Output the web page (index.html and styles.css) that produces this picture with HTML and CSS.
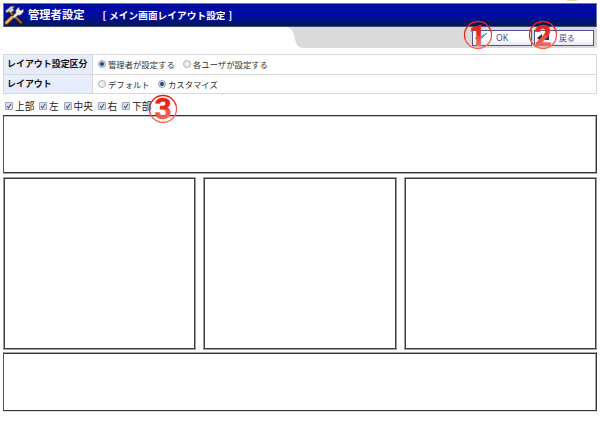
FILE: index.html
```html
<!DOCTYPE html>
<html lang="ja">
<head>
<meta charset="utf-8">
<title>管理者設定</title>
<link rel="stylesheet" href="styles.css">
</head>
<body>
<div class="page">
  <i class="tab-stub"></i>
  <header class="header">
    <svg class="tools" viewBox="0 0 20 20">
      <path d="M6 7 17 18" stroke="#26150c" stroke-width="4" stroke-linecap="round"/>
      <path d="M7 8 17 17.500" stroke="#9b5d35" stroke-width="2.200" stroke-linecap="round"/>
      <path d="M1 6 7 1l4 .6-2 1.600 1 2-3 3-2-1.500L3 8z" fill="#c9cdc9" stroke="#44484d" stroke-width=".7"/>
      <path d="M2.500 18 12 9" stroke="#563309" stroke-width="4" stroke-linecap="round"/>
      <path d="M2.500 17.500 8 12.300" stroke="#f3b44c" stroke-width="2.700" stroke-linecap="round"/>
      <path d="M8.500 11.500 12 8l-.2-3L15 2l.5 3 2 .5L19 4l.7 2.500-3 3.500-3 .2-3.400 3z" fill="#eeeee8" stroke="#686d75" stroke-width=".6"/>
    </svg>
    <h1 class="title">管理者設定</h1>
    <span class="subtitle">[ メイン画面レイアウト設定 ]</span>
  </header>
  <div class="toolbar">
    <svg class="curve" viewBox="0 0 18 21" preserveAspectRatio="none"><path d="M0 0h18v21h-1C8 21 9 14 7 8 5 2 3 1 0 0z" fill="#dadada"/></svg>
    <div class="actions">
      <button class="button ok"><svg class="icon" viewBox="0 0 12 12"><path d="m0 6 4 3 8-8-8 5z" fill="#39a9df" stroke="#39a9df"/></svg><span>OK</span></button>
      <button class="button back"><svg class="icon" viewBox="0 0 12 12"><path d="m0 6 5-4v3h5V2h2v6H5v2z" fill="#25354b"/></svg><span>戻る</span></button>
    </div>
    <svg class="marker first" viewBox="0 0 30 30"><use href="#ring"/><text x="14.500" y="25.700">1</text></svg>
    <svg class="marker second" viewBox="0 0 30 30"><use href="#ring"/><text x="15" y="25.700">2</text></svg>
  </div>
  <div class="settings">
    <div class="label">レイアウト設定区分</div>
    <div class="options"><span class="option wide"><i class="radio on"></i>管理者が設定する</span><span class="option"><i class="radio"></i>各ユーザが設定する</span></div>
    <div class="label">レイアウト</div>
    <div class="options"><span class="option narrow"><i class="radio"></i>デフォルト</span><span class="option"><i class="radio on"></i>カスタマイズ</span></div>
  </div>
  <div class="checks">
    <span class="check two"><svg class="box"><use href="#checked"/></svg>上部</span>
    <span class="check one"><svg class="box"><use href="#checked"/></svg>左</span>
    <span class="check two"><svg class="box"><use href="#checked"/></svg>中央</span>
    <span class="check one"><svg class="box"><use href="#checked"/></svg>右</span>
    <span class="check two"><svg class="box"><use href="#checked"/></svg>下部</span>
    <svg class="marker third" viewBox="0 0 30 30"><use href="#ring"/><text x="15" y="25.400">3</text></svg>
  </div>
  <main class="layout">
    <div class="panel top"></div>
    <div class="panel side"></div><div class="panel side"></div><div class="panel side"></div>
    <div class="panel bottom"></div>
  </main>
</div>
<svg class="defs">
  <defs>
    <linearGradient id="red" gradientUnits="userSpaceOnUse" x1="10" y1="3" x2="17" y2="28"><stop offset="0" stop-color="#df2512"/><stop offset=".5" stop-color="#e82b18"/><stop offset=".58" stop-color="#f4513e"/><stop offset="1" stop-color="#f86c5b"/></linearGradient>
    <circle id="ring" cx="15" cy="15" r="13.500"/>
    <symbol id="checked" viewBox="0 0 8 8"><path d="M.5.500h7v7h-7z" fill="#dce1ea" stroke="#a3a9b2"/><path d="m2 4 1.500 2L6 2" fill="none" stroke="#405dac" stroke-width="1.200"/></symbol>
  </defs>
</svg>
</body>
</html>
```

FILE: styles.css
```css
* { box-sizing: border-box; }
body { margin: 0; background: #fff; color: #333; font-family: "Noto Sans CJK JP", "Liberation Sans", sans-serif; }
.page { position: relative; width: 600px; height: 423px; padding: 3px 3px 0; overflow: hidden; }
.tab-stub { position: absolute; top: 0; left: 567px; width: 10px; height: 1px; background: #e6dd9c; }
.header { display: flex; align-items: center; height: 24px; border: 1px solid #6876ad; border-bottom-color: #414d73; border-radius: 1px; background: linear-gradient(#000d9e, #0009a4 50%, #001478 78%, #00175b); color: #fff; white-space: nowrap; }
.tools { width: 20px; height: 20px; flex: none; fill: none; }
.title { margin: 0 0 0 4px; width: 74.5px; font-size: 11.3px; line-height: 20px; font-weight: 700; position: relative; top: -1px; }
.subtitle { font-size: 9.65px; line-height: 20px; font-weight: 700; letter-spacing: .08px; word-spacing: .6px; }
.toolbar { position: relative; display: flex; justify-content: flex-end; height: 21px; margin-left: 284px; background: linear-gradient(90deg, transparent 17px, #dadada 17px); border-radius: 0 0 2px 0; }
.curve { width: 18px; height: 21px; margin-right: auto; }
.actions { display: flex; gap: 2px; padding: 3px 3px 0 0; }
.button { display: flex; align-items: center; width: 60px; height: 16px; padding: 0 2px; border: 1px solid #53539a; background: linear-gradient(#fff 55%, #e9e9f7); color: #45458b; font-family: inherit; font-size: 8.6px; line-height: 14px; white-space: nowrap; }
.icon { width: 12px; height: 12px; flex: none; }
.ok span { margin-left: 9px; font-family: "Noto Sans", sans-serif; }
.back span { margin-left: 10px; font-size: 7.8px; }
.marker { position: absolute; width: 30px; height: 30px; overflow: visible; fill: none; stroke: url(#red); stroke-width: 1.3; }
.marker text { fill: url(#red); stroke-width: .5; font: 700 30px Roboto, sans-serif; text-anchor: middle; }
.first { left: 176px; top: -7px; }
.second { left: 241px; top: -7px; }
.third { left: 145px; top: 0; }
.settings { display: grid; grid-template-columns: 89px 1fr; grid-template-rows: 20px 19px; margin-top: 6px; border-top: 1px solid #d8d8d8; border-left: 1px solid #d8d8d8; white-space: nowrap; }
.label, .options { display: flex; align-items: center; padding-bottom: 1px; border-right: 1px solid #d8d8d8; border-bottom: 1px solid #d8d8d8; line-height: 16px; }
.label { padding-left: 3px; background: #e6edff; color: #111; font-size: 8.95px; font-weight: 700; }
.options { padding-left: 5px; font-size: 8.35px; }
.option { display: flex; align-items: center; }
.wide { width: 85px; }
.narrow { width: 60px; }
.radio { width: 8px; height: 8px; margin-right: 2px; border: 1px solid #b0b4b8; border-radius: 50%; background: #eee; }
.radio.on { border-color: #8fa2ba; background: radial-gradient(circle, #244878 0 1.4px, #d3e2f1 2.6px); }
.checks { position: relative; display: flex; height: 21px; padding: 3px 0 0 2px; color: #222; font-size: 9.7px; line-height: 18px; white-space: nowrap; }
.check { display: flex; align-items: center; }
.check.two { width: 34px; }
.check.one { width: 24.5px; }
.box { width: 8px; height: 8px; margin-right: 2px; flex: none; }
.layout { display: grid; grid-template-columns: 193px 194px 193px; column-gap: 7px; grid-template-rows: 58px 173px 59px; row-gap: 4px; }
.panel { border: 1px solid #333; }
.top { grid-column: 1 / -1; border-left-color: #555; box-shadow: 0 1px #aaa, inset 0 1px #c5c5c5, inset -1px 0 #aaa; }
.side { border-color: #9c9c9c; box-shadow: inset 0 0 0 1px #3d3d3d; }
.bottom { grid-column: 1 / -1; height: 59px; margin-top: -2px; border-top-color: #aaa; border-left-color: #555; box-shadow: inset 0 1px #333, inset -1px 0 #aaa, 0 1px #ddd; }
.defs { position: absolute; top: 0; left: 0; width: 0; height: 0; }
```
